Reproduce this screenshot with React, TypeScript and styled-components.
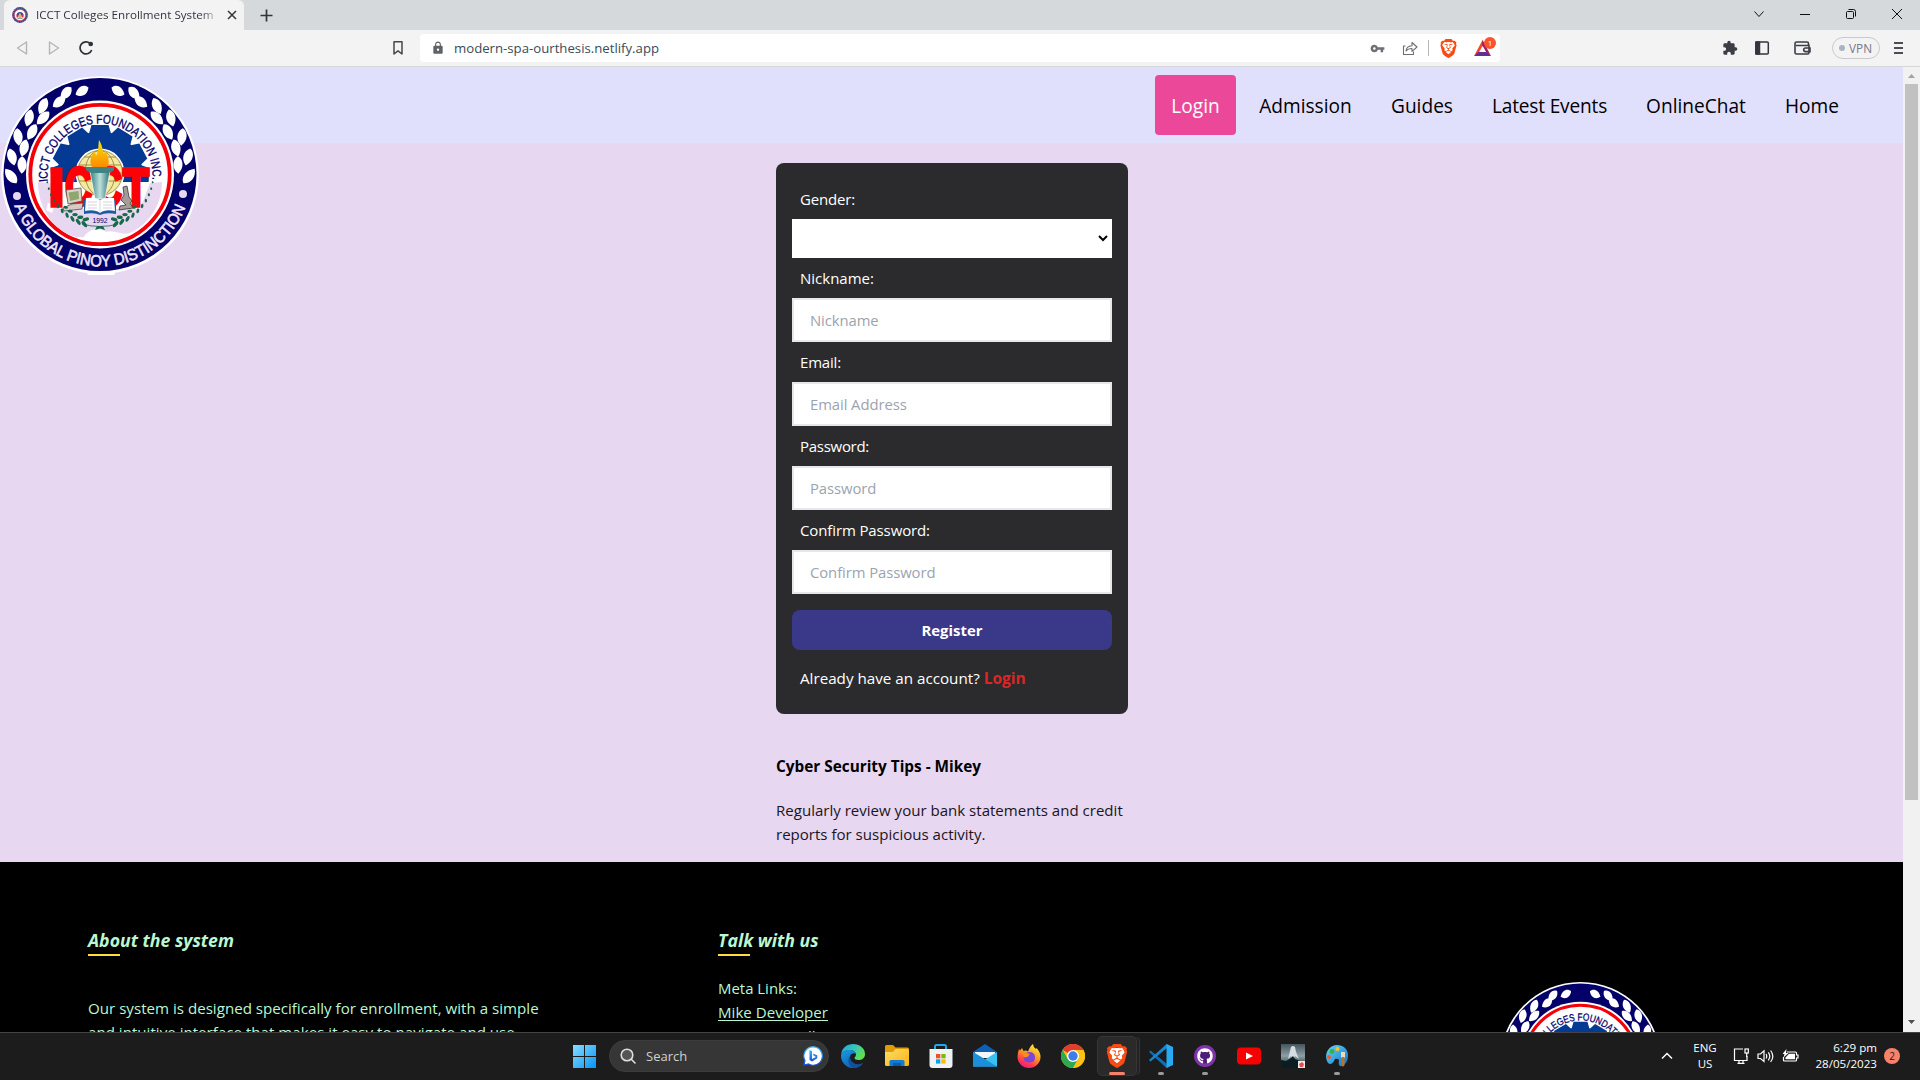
import React from "react";
import styled, { createGlobalStyle, css } from "styled-components";
import { MdExtension, MdVpnKey, MdLock } from "react-icons/md";
import { SiBrave } from "react-icons/si";
import { FaGithub } from "react-icons/fa";

const Global = createGlobalStyle`
  *, *::before, *::after { box-sizing: border-box; }
  html, body { margin: 0; padding: 0; overflow: hidden; }
  body { font-family: "Open Sans", "Noto Sans", sans-serif; }
  h3, p { margin: 0; font-weight: 400; }
  svg { display: block; flex: none; }
`;

const Desktop = styled.div`
  display: flex;
  flex-direction: column;
  width: 1920px;
  height: 1080px;
  overflow: hidden;
`;

/* ---------- browser chrome ---------- */
const TabStrip = styled.div`
  display: flex;
  align-items: center;
  height: 30px;
  padding-left: 4px;
  background: #d5d9dc;
`;
const Tab = styled.div`
  display: flex;
  align-items: center;
  width: 240px;
  height: 30px;
  padding: 0 7px 0 8px;
  border-radius: 6px 6px 0 0;
  background: #f3f3f3;
`;
const TabTitle = styled.div`
  width: 184px;
  margin: 0 7px 1px 8px;
  overflow: hidden;
  white-space: nowrap;
  font-size: 11.65px;
  line-height: 16px;
  color: #33353f;
  mask-image: linear-gradient(90deg, #000 165px, transparent 184px);
`;
const NewTab = styled.div`
  margin-left: 16px;
  flex: 1;
`;
const WindowControls = styled.div`
  display: flex;
  align-items: center;
  gap: 30px;
  padding: 0 15px 2px 0;
`;
const Toolbar = styled.div`
  display: flex;
  align-items: center;
  height: 37px;
  border-bottom: 1px solid #d4d7da;
  background: #f3f3f3;
`;
const NavButtons = styled.div`
  display: flex;
  align-items: center;
  gap: 16px;
  width: 390px;
  padding-left: 15px;
`;
const AddressBar = styled.div`
  display: flex;
  align-items: center;
  width: 1080px;
  height: 28px;
  margin-left: 14px;
  padding: 0 9px 0 11px;
  border-radius: 4px;
  background: #fff;
`;
const Url = styled.span`
  flex: 1;
  margin-left: 9px;
  font-size: 13.2px;
  color: #3b4a5a;
`;
const AddressActions = styled.div`
  display: flex;
  align-items: center;
`;
const ShareSlot = styled.span`
  margin-left: 17px;
`;
const Divider = styled.i`
  width: 1px;
  height: 16px;
  margin: 0 10px;
  background: #b4b6ba;
`;
const RewardsIcon = styled.div`
  position: relative;
  margin-left: 16px;
`;
const RewardsBadge = styled.span`
  position: absolute;
  left: 10px;
  top: -3px;
  width: 12px;
  height: 12px;
  border-radius: 6px;
  background: #fb542b;
  color: #fff;
  font-size: 8px;
  line-height: 12px;
  text-align: center;
`;
const Extensions = styled.div`
  display: flex;
  align-items: center;
  justify-content: flex-end;
  flex: 1;
  padding-right: 15px;
`;
const Spacer = styled.i<{ $wide?: boolean }>`
  width: ${(p) => (p.$wide ? 24 : 16)}px;
`;
const VpnPill = styled.div`
  display: flex;
  align-items: center;
  gap: 4px;
  width: 48px;
  height: 22px;
  margin: 0 13px 0 21px;
  padding-left: 6px;
  border: 1px solid #c8cacf;
  border-radius: 11px;
  color: #74798b;
  font-size: 11.8px;
  &::before {
    content: "";
    width: 6px;
    height: 6px;
    border-radius: 3px;
    background: #aeb1c2;
  }
`;

/* ---------- page ---------- */
const Viewport = styled.div`
  display: flex;
  height: 965px;
  overflow: hidden;
`;
const Page = styled.div`
  width: 1903px;
  height: 965px;
  overflow: hidden;
  background: #e8d7f1;
`;
const SiteHeader = styled.header`
  position: relative;
  display: flex;
  justify-content: flex-end;
  align-items: center;
  height: 76px;
  padding-right: 48px;
  background: #e0dffc;
`;
const HeaderLogo = styled.div`
  position: absolute;
  left: 0;
  top: 8px;
`;
const SiteNav = styled.nav`
  display: flex;
  gap: 7px;
`;
const NavLink = styled.a<{ $active?: boolean; $w: number; $ls?: number }>`
  width: ${(p) => p.$w}px;
  padding: 17px 0 15px;
  border-radius: 4px;
  text-align: center;
  font-size: 19.1px;
  line-height: 28px;
  letter-spacing: ${(p) => p.$ls ?? 0}px;
  white-space: nowrap;
  color: ${(p) => (p.$active ? "#fff" : "#000")};
  background: ${(p) => (p.$active ? "#ec4899" : "transparent")};
`;
const Main = styled.main`
  width: 352px;
  height: 719px;
  margin-left: 776px;
  padding-top: 20px;
`;
const Card = styled.form`
  display: flex;
  flex-direction: column;
  height: 551px;
  padding: 16px;
  border-radius: 8px;
  background: #2b2b2d;
  color: #fff;
  & > * { flex-shrink: 0; }
`;
const Label = styled.label<{ $ls?: number }>`
  padding: 8px;
  font-size: 15px;
  line-height: 24px;
  letter-spacing: ${(p) => p.$ls ?? -0.18}px;
`;
const Select = styled.div`
  display: flex;
  align-items: center;
  justify-content: flex-end;
  height: 39px;
  padding-right: 4px;
  background: #fff;
`;
const Input = styled.input`
  display: block;
  width: 320px;
  height: 44px;
  padding: 8px 16px;
  border: 2px solid #e5e7eb;
  border-radius: 0;
  background: #fff;
  font: 14.85px/24px "Open Sans", "Noto Sans", sans-serif;
  letter-spacing: -0.08px;
  &::placeholder { color: #9ca3af; opacity: 1; }
`;
const Submit = styled.button`
  height: 40px;
  margin-top: 16px;
  border: 0;
  border-radius: 8px;
  background: #3a3889;
  color: #fff;
  font: 700 14.9px/24px "Open Sans", "Noto Sans", sans-serif;
`;
const Hint = styled.p`
  padding: 16px 8px 0;
  font-size: 15.2px;
  line-height: 24px;
  white-space: nowrap;
  b { color: #dc2626; font-size: 15.5px; }
`;
const TipTitle = styled.h3`
  margin-top: 40px;
  font-size: 15.35px;
  line-height: 24px;
  font-weight: 700;
  color: #000;
`;
const TipText = styled.p`
  margin-top: 20px;
  font-size: 15.05px;
  line-height: 24px;
  white-space: nowrap;
  color: #1b1422;
`;
const Footer = styled.footer`
  display: flex;
  height: 170px;
  padding-left: 88px;
  background: #000;
  color: #bbf7d0;
`;
const FooterColumn = styled.section<{ $w: number }>`
  width: ${(p) => p.$w}px;
  padding-top: 64px;
`;
const FooterTitle = styled.h3`
  width: max-content;
  font-size: 17.7px;
  line-height: 28px;
  font-style: italic;
  font-weight: 700;
  &::after {
    content: "";
    display: block;
    width: 32px;
    height: 2px;
    background: #ffdd3c;
  }
`;
const FooterText = styled.p<{ $top: number; $size?: number }>`
  margin-top: ${(p) => p.$top}px;
  font-size: ${(p) => p.$size ?? 15.13}px;
  line-height: 24px;
  white-space: nowrap;
`;
const FooterLink = styled.a`
  display: block;
  font-size: 15.1px;
  line-height: 24px;
  text-decoration: underline;
  text-decoration-thickness: 1px;
  text-underline-offset: 1.5px;
`;
const FooterLogo = styled.div`
  margin: 119px 0 0 63px;
`;
const Scrollbar = styled.div`
  display: flex;
  flex-direction: column;
  align-items: center;
  width: 17px;
  height: 965px;
  padding-top: 7px;
  background: #f1f1f1;
`;
const Thumb = styled.div`
  flex: none;
  width: 13px;
  height: 716px;
  margin: 6px 0 220px;
  background: #c1c1c1;
`;

/* ---------- taskbar ---------- */
const Taskbar = styled.div`
  display: flex;
  height: 48px;
  padding: 0 0 1px 573px;
  border-top: 1px solid #434343;
  background: #1c1c1c;
  color: #fff;
`;
const Centered = styled.div`
  display: flex;
  align-items: center;
`;
const SearchPill = styled.div`
  display: flex;
  align-items: center;
  width: 220px;
  height: 32px;
  margin: 0 2px 0 13px;
  padding: 0 5px 0 10px;
  border: 1px solid #3d3d3d;
  border-radius: 16px;
  background: #363636;
  color: #d0d0d0;
  font-size: 13px;
`;
const SearchText = styled.span`
  flex: 1;
  margin-left: 10px;
`;
const AppTile = styled.div<{ $active?: boolean }>`
  position: relative;
  display: flex;
  align-items: center;
  justify-content: center;
  width: 40px;
  height: 40px;
  margin: 0 2px;
  border-radius: 5px;
  ${(p) =>
    p.$active &&
    css`
      border: 1px solid #363636;
      background: #2a2a2a;
      box-shadow: 3px 0 0 -1px #222, 4px 0 0 -1px #353535;
    `}
`;
const Indicator = styled.i<{ $wide?: boolean }>`
  position: absolute;
  bottom: ${(p) => (p.$wide ? 0 : 1)}px;
  width: ${(p) => (p.$wide ? 16 : 6)}px;
  height: 3px;
  border-radius: 2px;
  background: ${(p) => (p.$wide ? "#f7826a" : "#9a9a9a")};
`;
const Tray = styled.div`
  display: flex;
  align-items: center;
  justify-content: flex-end;
  flex: 1;
  padding-right: 20px;
  font-size: 11.6px;
  line-height: 16px;
`;
const Language = styled.div`
  width: 30px;
  margin: 0 13px 0 17px;
  text-align: center;
  font-size: 11.5px;
`;
const Status = styled.div`
  display: flex;
  align-items: center;
  gap: 8px;
  padding-right: 1px;
`;
const Clock = styled.div`
  width: 70px;
  margin: 0 7px 0 7px;
  text-align: right;
`;
const Badge = styled.div`
  width: 16px;
  height: 16px;
  border-radius: 8px;
  background: #f7826a;
  color: #1c1c1c;
  font-size: 10px;
  text-align: center;
`;

/* ---------- college seal ---------- */
const leaves: [number, number, number, number][] = [
  [82, 16, 7, -12], [66, 18, 7.5, -32], [59, 27, 7.5, -22], [43, 31, 8.5, -52],
  [43, 43, 8.5, -32], [29, 43, 8.5, -62], [32, 57, 8.5, -48], [18, 62, 8.5, -82],
  [24, 73, 8.5, -62], [12, 82, 8.5, -92], [22, 90, 8.5, -75], [11, 101, 9, 65],
];
const teeth = [-93, -62, -31, 0, 31, 62, 93];
const sprig = [100, 107, 114, 121, 128, 135, 142, 149, 156, 163];

function Seal({ size, id, ground }: { size: number; id: string; ground: string }) {
  return (
    <svg width={size} height={size} viewBox="0 0 200 200">
      <defs>
        <path id={id + "t"} d="M47.8 106.5A52.5 52.5 0 1 1 152.2 106.5" />
        <path id={id + "b"} d="M13.5 128A91 91 0 0 0 187.5 126" />
        <clipPath id={id + "c"}><rect x="30" y="30" width="140" height="77" /></clipPath>
        <linearGradient id={id + "f"} x1="0" y1="0" x2="0" y2="1">
          <stop offset="0" stopColor="#f5e400" /><stop offset="1" stopColor="#ff8a00" />
        </linearGradient>
        <linearGradient id={id + "s"}>
          <stop offset="0" stopColor="#2f7f7f" /><stop offset=".5" stopColor="#bfe0dc" /><stop offset="1" stopColor="#2c6f75" />
        </linearGradient>
      </defs>
      <path d="M84 192H118L114 200H88Z" fill="#fff" />
      <circle cx="100" cy="100" r="98.8" fill="#fff" />
      <circle cx="100" cy="99.5" r="96.5" fill="#04006a" />
      {[0, 1].map((side) => (
        <g key={side} transform={side ? "translate(200 0) scale(-1 1)" : undefined} fill="#fff">
          {leaves.map(([x, y, r, a], i) => (
            <path key={i} transform={`translate(${x} ${y}) rotate(${a})`} d={`M${-r} 2C${-r * 0.5} -5.5 ${r * 0.5} -7 ${r} -2C${r * 0.7} 5 ${-r * 0.3} 7 ${-r} 2Z`} />
          ))}
        </g>
      ))}
      <circle cx="17" cy="121" r="4" fill="#e8d7f1" />
      <circle cx="183" cy="119" r="4" fill="#e8d7f1" />
      <circle cx="100" cy="99.5" r="74" fill="#fff" />
      <circle cx="100" cy="99.5" r="69.7" fill="#fff" stroke="#f40009" strokeWidth="3.8" />
      <path d="M38 107L50 108L60 134L140 134L150 108L162 107C162 130 149 149 130 158C124 161 112 154 106 157C100 152 88 154 84 162C78 163 70 161 64 157C47 146 38 127 38 107Z" fill={ground} />
      <path d="M48 128l7 2-3 8-6-3z" fill="#fff" />
      <text fontFamily="Liberation Sans, Arial, sans-serif" fontSize="12.5" fill="#04006a" stroke="#04006a" strokeWidth=".35">
        <textPath href={`#${id}t`} textLength="174" lengthAdjust="spacingAndGlyphs">ICCT COLLEGES FOUNDATION INC.</textPath>
      </text>
      <text fontFamily="Liberation Sans, Arial, sans-serif" fontSize="16" fill="#efe6fa" stroke="#efe6fa" strokeWidth=".6">
        <textPath href={`#${id}b`} startOffset="3" textLength="222" lengthAdjust="spacingAndGlyphs">A GLOBAL PINOY DISTINCTION</textPath>
      </text>
      <g clipPath={`url(#${id}c)`} fill="#043a93">
        <circle cx="100" cy="99" r="42.5" />
        {teeth.map((a) => (
          <path key={a} transform={`rotate(${a} 100 99)`} d="M88 62L91.500 50H108.500L112 62Z" />
        ))}
      </g>
      <circle cx="100" cy="98" r="24.500" fill="#fff" />
      <circle cx="100" cy="98" r="22.500" fill="#f3e9a0" />
      <g fill="none" stroke="#8a7a2c" strokeWidth=".8">
        <circle cx="100" cy="98" r="22.500" />
        <ellipse cx="100" cy="98" rx="15" ry="22.500" />
        <path d="M79 90H121M77.500 98H122.500M79 106H121M84 82H116" />
      </g>
      <g fontFamily="Liberation Sans, Arial, sans-serif" fontWeight="700" fontSize="54" fill="#fb0207" stroke="#fb0207" strokeWidth="3.500">
        <text x="48.500" y="130.500" textLength="16" lengthAdjust="spacingAndGlyphs">I</text>
        <text x="65" y="130" textLength="27" lengthAdjust="spacingAndGlyphs">C</text>
        <text x="96" y="130" textLength="26" lengthAdjust="spacingAndGlyphs">C</text>
        <text x="123" y="130.500" textLength="26" lengthAdjust="spacingAndGlyphs">T</text>
      </g>
      <path d="M90 96H110L105 124H95Z" fill={`url(#${id}s)`} stroke="#fff" strokeWidth=".7" />
      <path d="M86 92h28v3q-3 3-6 3H92q-3 0-6-3z" fill="#3d8585" />
      <path d="M92 92C88 84 93 82 93 76C95 77 96 79 96 81C99 76 98 71 99 65C103 71 102 75 104 79L106 73C105 80 112 85 107 92Z" fill={`url(#${id}f)`} />
      <path d="M66 115l15-2 1 13-14 3z" fill="#d9d2cb" stroke="#5b5148" strokeWidth=".8" />
      <path d="M68.500 117.500l10-1.500.500 8-9 2z" fill="#8fa66f" />
      <path d="M63 133l9-4 11-1-1 6-18 2z" fill="#d7c9c4" stroke="#5b5148" strokeWidth=".8" />
      <path d="M123 112l4-1 2 11 3 4-2 2 3 5-14 2 1-4 6-1-5-5 3-5z" fill="#a39c98" stroke="#3a3433" strokeWidth=".8" />
      <path d="M84 125h32v14q-10-2-16 1q-6-3-16-1z" fill="#1f5ba5" />
      <path d="M86 123q9-1 14 2q5-3 14-2l1 13q-10-2-15 2q-5-4-15-2z" fill="#fff" />
      <path d="M88 127h9M88 130h9M88 133h9M103 127h9M103 130h9M103 133h9M100 125v13" stroke="#b9b9c6" strokeWidth=".6" />
      {[0, 1].map((side) => (
        <g key={side} transform={side ? "translate(200 0) scale(-1 1)" : undefined} fill="#17694a">
          {sprig.map((a, i) => (
            <g key={a} transform={`rotate(${-a} 100 98)`}>
              <ellipse cx="100" cy={44.5} rx={1 + i * 0.3} ry={0.9 + i * 0.1} transform="rotate(32 100 44.500)" />
              {i > 4 && <ellipse cx="100" cy="49.500" rx={1 + i * 0.26} ry={0.9 + i * 0.1} transform="rotate(-32 100 49.500)" />}
            </g>
          ))}
        </g>
      ))}
      <path d="M82 149q18 5 36 0" stroke="#17694a" strokeWidth=".8" fill="none" />
      <path d="M97 151l-2 4 5-1.500 5 1.500-2-4z" fill="#17694a" />
      <text x="100" y="148" textAnchor="middle" fontFamily="Liberation Sans, Arial, sans-serif" fontSize="6.800" fill="#04006a">1992</text>
    </svg>
  );
}

/* ---------- favicon: the seal reduced to its colours ---------- */
const Favicon = () => (
  <svg width="16" height="16" viewBox="0 0 16 16">
    <circle cx="8" cy="8" r="7.900" fill="#3c3a80" />
    <circle cx="8" cy="8" r="7" fill="none" stroke="#8f8cb8" strokeWidth=".9" strokeDasharray="1 1" />
    <circle cx="8" cy="8" r="5.700" fill="#fff" stroke="#d8405a" strokeWidth=".8" />
    <path d="M4.500 8.500a3.500 3.500 0 0 1 7 0z" fill="#2c4f9c" />
    <path d="M4.500 7.500h2v3h-2zM9.500 7.500h2v3h-2z" fill="#e2293a" />
    <path d="M7 6.500h2V11H7z" fill="#d8b870" />
    <path d="M5.500 11.500h5" stroke="#5c9080" strokeWidth=".8" />
  </svg>
);

/* ---------- icons ---------- */
const BraveMark = ({ size }: { size: number }) => (
  <svg width={size} height={size} viewBox="0 0 24 24">
    <path d="M6 4h12l2 5-3 10-5 3-5-3L4 9z" fill="#fff" />
    <SiBrave size={24} color="#fb4a12" />
  </svg>
);
const StartIcon = () => (
  <svg width="23" height="23" viewBox="0 0 23 23">
    <defs><linearGradient id="win" x1="0" y1="0" x2="1" y2="1"><stop stopColor="#86deff" /><stop offset="1" stopColor="#0894f5" /></linearGradient></defs>
    <path d="M0 0h11v11H0zM12 0h11v11H12zM0 12h11v11H0zM12 12h11v11H12z" fill="url(#win)" />
  </svg>
);
const SearchIcon = () => (
  <svg width="16" height="16" viewBox="0 0 16 16" fill="#555" stroke="#dedede" strokeWidth="1.600">
    <circle cx="7" cy="7" r="5.800" /><path d="M11.300 11.300L15 15" strokeLinecap="round" />
  </svg>
);
const Bing = () => (
  <svg width="20" height="20" viewBox="0 0 20 20">
    <defs><linearGradient id="bing" x1="0" y1="0" x2="0" y2="1"><stop stopColor="#35b8f6" /><stop offset="1" stopColor="#1a4fd6" /></linearGradient></defs>
    <path d="M10 .8A9.200 9.200 0 1 1 5.600 18L1 19l1-4.500A9.200 9.200 0 0 1 10 .8z" fill="#fff" stroke="url(#bing)" strokeWidth="1.200" />
    <path d="M6.500 4l2.500 1v8l4-2-2.300-1.200L9.800 7.500l4.500 1.800v3L9 15.500l-2.500-1.500z" fill="url(#bing)" />
  </svg>
);
const Edge = () => (
  <svg width="24" height="24" viewBox="0 0 24 24">
    <defs>
      <linearGradient id="e1" x1="0" y1="0" x2="1" y2=".5"><stop stopColor="#1fa2e6" /><stop offset=".55" stopColor="#37c6b8" /><stop offset="1" stopColor="#5fe04c" /></linearGradient>
      <linearGradient id="e2" x1="0" y1="0" x2=".7" y2="1"><stop stopColor="#1b9de2" /><stop offset="1" stopColor="#0d57ad" /></linearGradient>
    </defs>
    <path d="M0 10.500C1 4 6 0 12 0c7 0 12 4.500 12 10 0 4-3 6-6.500 6-2.500 0-4-1-4-2s1.500-1.500 1.500-3.500C15 8 12 6 8.500 6 4 6 1 8.500 0 10.500z" fill="url(#e1)" />
    <path d="M0 11C1 8 4.500 6 8.500 6c3.500 0 6 1.800 6.400 4C13 8.500 9 9.500 9 13.500c0 4 4 7 8 7 2 0 3.500-.6 5-1.500A12 12 0 0 1 12 24C5 24-.3 18 0 11z" fill="url(#e2)" />
    <path d="M9.200 12c-.8 4 3 8.500 7.800 8.500 2 0 3.500-.6 5-1.500-2 3.200-5.500 5-9 5C8 23 5.500 15 9.200 12z" fill="#134f9c" />
  </svg>
);
const Explorer = () => (
  <svg width="24" height="22" viewBox="0 0 24 22">
    <defs><linearGradient id="ex" x1="0" y1="0" x2="1" y2="1"><stop stopColor="#ffdc6b" /><stop offset="1" stopColor="#f8b40c" /></linearGradient></defs>
    <path d="M0 1.500Q0 0 1.500 0H8l2.500 2.500H22.500Q24 2.500 24 4v6H0z" fill="#e09b06" />
    <path d="M0 7h8l2.500-3H22.500Q24 4 24 5.500v14Q24 21 22.500 21H1.500Q0 21 0 19.500z" fill="url(#ex)" />
    <path d="M4.500 21v-4.500Q4.500 15 6 15h12q1.500 0 1.500 1.500V21z" fill="#1379d2" /><path d="M8 18h8v3H8z" fill="#0c5aa8" />
  </svg>
);
const Store = () => (
  <svg width="24" height="24" viewBox="0 0 24 24">
    <path d="M6 7V2.500Q6 1 7.500 1h8Q17 1 17 2.500V7" fill="none" stroke="#1fa7ee" strokeWidth="2" />
    <path d="M.5 5h23v16q0 3-3 3h-17q-3 0-3-3z" fill="#eff1f3" />
    <path d="M7 10h4.300v4.300H7z" fill="#f25022" /><path d="M12.300 10h4.300v4.300h-4.300z" fill="#7fba00" />
    <path d="M7 15.300h4.300v4.300H7z" fill="#00a4ef" /><path d="M12.300 15.300h4.300v4.300h-4.300z" fill="#ffb900" />
  </svg>
);
const Mail = () => (
  <svg width="24" height="24" viewBox="0 0 24 24">
    <path d="M0 8L12 0l12 8v3H0z" fill="#0c5fb4" /><path d="M2 8h20v6H2z" fill="#f3f5f7" />
    <path d="M0 8l12 7.500L24 8v14.500H0z" fill="#35c1f1" /><path d="M0 22.500V8l24 14.500z" fill="#1b8fdc" />
  </svg>
);
const Firefox = () => (
  <svg width="24" height="24" viewBox="0 0 24 24">
    <defs><linearGradient id="ff" x1=".8" y1="0" x2=".3" y2="1"><stop stopColor="#fff04a" /><stop offset=".45" stopColor="#ff9a1f" /><stop offset=".8" stopColor="#ff3750" /><stop offset="1" stopColor="#f0168c" /></linearGradient></defs>
    <path d="M2 5l1 1.500L5 4l1.500 3Q9 6 11 7.500 13 2 16 0q0 3 3 5l.5-1Q23.500 8 23.500 13A11.500 11 0 0 1 .5 13Q.5 9 2 5z" fill="url(#ff)" />
    <path d="M12 8q6 0 6 5.500T12 18.500 6.500 13q3 1 5-1-3 0-3.500-2.500Q10 8 12 8z" fill="#7a45d9" /><path d="M5 8q4-1 6 1.500 2 0 1.500 1.300-2 3.200-5.500 2.200z" fill="#ff8a1e" />
  </svg>
);
const Chrome = () => (
  <svg width="24" height="24" viewBox="0 0 24 24">
    <circle cx="12" cy="12" r="12" fill="#fbc116" />
    <path d="M12 12L1.600 6A12 12 0 0 1 22.400 6H12z" fill="#e33b2e" />
    <path d="M1.600 6A12 12 0 0 0 12 24l5.200-9L12 12 6.800 15z" fill="#2da94f" />
    <path d="M12 6h10.400A12 12 0 0 1 12 24l5.200-9z" fill="#fbc116" />
    <circle cx="12" cy="12" r="6" fill="#fff" /><circle cx="12" cy="12" r="4.700" fill="#3b7ded" />
  </svg>
);
const VsCode = () => (
  <svg width="24" height="24" viewBox="0 0 24 24">
    <path d="M1.500 6.500L0 8l17.500 16 3-2z" fill="#0e6fb8" /><path d="M1.500 17.500L0 16 17.500 0l3 2z" fill="#1787cf" />
    <path d="M17.500 0L24 3v18l-6.500 3z" fill="#2aa9f3" />
  </svg>
);
const GithubDesktop = () => (
  <svg width="24" height="24" viewBox="0 0 24 24">
    <circle cx="12" cy="12" r="11" fill="#8034a9" /><circle cx="12" cy="12" r="7.500" fill="#4d1d78" />
    <FaGithub x="4" y="4" size={16} color="#fff" />
  </svg>
);
const YouTube = () => (
  <svg width="24" height="18" viewBox="0 0 24 18"><rect width="24" height="17" rx="4" y=".5" fill="#f80000" /><path d="M9 5.500l7 3.500-7 3.500z" fill="#fff" /></svg>
);
const Game = () => (
  <svg width="24" height="24" viewBox="0 0 24 24">
    <defs><linearGradient id="gm" x1="0" y1="0" x2="0" y2="1"><stop stopColor="#46545c" /><stop offset=".5" stopColor="#8d9fa6" /><stop offset="1" stopColor="#0d2224" /></linearGradient></defs>
    <path d="M0 0h24v24H0z" fill="url(#gm)" />
    <path d="M10 3q2-2 4 0l1 5 3 7-4-3-1 2h-2l-1-2-3 3 2-8z" fill="#d5dde0" /><path d="M0 16l5 1 5-3 2-2 2 3 5 2h5v7H0z" fill="#0b1d20" />
    <path d="M17 17h7v7h-7z" fill="#f5e5e5" /><path d="M18 20l3-2 2 2-1 3h-3z" fill="#e05050" />
  </svg>
);
const Paint = () => (
  <svg width="24" height="24" viewBox="0 0 24 24">
    <defs><linearGradient id="pt" x1="0" y1="0" x2="1" y2="1"><stop stopColor="#6cd7f7" /><stop offset="1" stopColor="#0a72c9" /></linearGradient></defs>
    <path d="M12 1C18 1 23 5 23 11q0 6-3 9-3 3-5 2t-1-5q0-3-4-2-2 5-5 5T1 13C1 6 6 1 12 1z" fill="url(#pt)" />
    <circle cx="7" cy="7.500" r="2.400" fill="#3fae3f" /><circle cx="12.500" cy="5" r="2" fill="#ffc419" /><circle cx="4" cy="13" r="2" fill="#ef5a35" />
    <path d="M16 8h4v6h-4z" fill="#eadbc0" /><path d="M16.500 13h3v8q-1.500 3-3 0z" fill="#b97326" />
  </svg>
);

const apps: { icon: React.ReactNode; running?: boolean; active?: boolean }[] = [
  { icon: <Edge /> },
  { icon: <Explorer /> },
  { icon: <Store /> },
  { icon: <Mail /> },
  { icon: <Firefox /> },
  { icon: <Chrome /> },
  { icon: <BraveMark size={24} />, running: true, active: true },
  { icon: <VsCode />, running: true },
  { icon: <GithubDesktop />, running: true },
  { icon: <YouTube /> },
  { icon: <Game /> },
  { icon: <Paint />, running: true },
];

const fields = [
  { label: "Nickname:", hint: "Nickname", ls: 0 },
  { label: "Email:", hint: "Email Address", ls: -0.18 },
  { label: "Password:", hint: "Password", ls: -0.28 },
  { label: "Confirm Password:", hint: "Confirm Password", ls: -0.12 },
];

function BrowserChrome() {
  return (
    <>
      <TabStrip>
        <Tab>
          <Favicon />
          <TabTitle>ICCT Colleges Enrollment System</TabTitle>
          <svg width="10" height="10" viewBox="0 0 10 10" stroke="#33353d" strokeWidth="1.500"><path d="M1 1l8 8M9 1l-8 8" /></svg>
        </Tab>
        <NewTab>
          <svg width="13" height="13" viewBox="0 0 13 13" stroke="#33353d" strokeWidth="1.700"><path d="M6.500 .5v12M.5 6.500h12" /></svg>
        </NewTab>
        <WindowControls>
          <svg width="16" height="16" viewBox="0 0 16 16" fill="none" stroke="#111"><path d="M3.500 5.500l4.500 5 4.500-5" /></svg>
          <svg width="16" height="16" viewBox="0 0 16 16" stroke="#111"><path d="M3 8.500h10" /></svg>
          <svg width="16" height="16" viewBox="0 0 16 16" fill="none" stroke="#111"><rect x="3.500" y="5.500" width="7" height="7" rx="1" /><path d="M5.500 3.500h5q2 0 2 2v5" /></svg>
          <svg width="16" height="16" viewBox="0 0 16 16" stroke="#111"><path d="M3 3l10 10M13 3L3 13" /></svg>
        </WindowControls>
      </TabStrip>
      <Toolbar>
        <NavButtons>
          <svg width="16" height="16" viewBox="0 0 16 16" fill="none" stroke="#b3b5b9" strokeWidth="1.400" strokeLinejoin="round"><path d="M11.500 2v12L2.500 8z" /></svg>
          <svg width="16" height="16" viewBox="0 0 16 16" fill="none" stroke="#b3b5b9" strokeWidth="1.400" strokeLinejoin="round"><path d="M2.500 2v12l9-6z" /></svg>
          <svg width="16" height="16" viewBox="0 0 16 16" fill="none" stroke="#2f3238" strokeWidth="1.700"><path d="M12.700 10A6 6 0 1 1 11.200 3.500" /><circle cx="11.700" cy="4" r="1.500" fill="#2f3238" /></svg>
        </NavButtons>
        <svg width="16" height="16" viewBox="0 0 16 16" fill="none" stroke="#45484f" strokeWidth="1.500" strokeLinejoin="round"><path d="M4 1.800h8V14l-4-3.200L4 14z" /></svg>
        <AddressBar>
          <MdLock size={14} color="#5f6368" />
          <Url>modern-spa-ourthesis.netlify.app</Url>
          <AddressActions>
            <MdVpnKey size={15} color="#6c6f75" />
            <ShareSlot>
              <svg width="16" height="16" viewBox="0 0 16 16" fill="none" stroke="#6c6f75" strokeWidth="1.100" strokeLinejoin="round">
                <path d="M3.500 6H1.500v8.500h10v-3" /><path d="M4 11q.5-5 6-5.300V2.500L15 7l-5 4.300V8.500Q6 8.500 4 11z" />
              </svg>
            </ShareSlot>
            <Divider />
            <BraveMark size={19} />
            <RewardsIcon>
              <svg width="17" height="16" viewBox="0 0 17 16">
                <path d="M8.500 0L11 4.500 5.500 12 0 16z" fill="#ff4724" /><path d="M8.500 0l8.500 16-5-4-4-7z" fill="#9e1f63" /><path d="M0 16l4.500-4.200h8L17 16z" fill="#662d91" />
                <path d="M8.500 6l3.300 5.900H5.200z" fill="#fff" />
              </svg>
              <RewardsBadge>1</RewardsBadge>
            </RewardsIcon>
          </AddressActions>
        </AddressBar>
        <Extensions>
          <MdExtension size={16} color="#3b3e45" />
          <Spacer />
          <svg width="16" height="16" viewBox="0 0 16 16" fill="none" stroke="#33363d" strokeWidth="1.500"><rect x="1.800" y="2" width="12.500" height="12" rx="1" /><path d="M2 2h3.500v12H2z" fill="#33363d" /></svg>
          <Spacer $wide />
          <svg width="17" height="16" viewBox="0 0 17 16" fill="none" stroke="#3b3e45" strokeWidth="1.600"><path d="M14.500 5V3.500Q14.500 2 13 2H2.500Q1 2 1 3.500v9Q1 14 2.500 14h11q1.500 0 1.500-1.500V5.500H2" /><path d="M16 8h-4.500a1.800 1.800 0 0 0 0 3.600H16z" /></svg>
          <VpnPill>VPN</VpnPill>
          <svg width="12" height="14" viewBox="0 0 12 14" stroke="#4b4e55" strokeWidth="1.800"><path d="M1 2h9M1 7h9M1 12h9" /></svg>
        </Extensions>
      </Toolbar>
    </>
  );
}

export default function App() {
  return (
    <Desktop>
      <Global />
      <BrowserChrome />
      <Viewport>
        <Page>
          <SiteHeader>
            <HeaderLogo><Seal size={200} id="top" ground="#e8d7f1" /></HeaderLogo>
            <SiteNav>
              <NavLink $active $w={81}>Login</NavLink>
              <NavLink $w={125}>Admission</NavLink>
              <NavLink $w={94}>Guides</NavLink>
              <NavLink $w={147} $ls={-0.18}>Latest Events</NavLink>
              <NavLink $w={132}>OnlineChat</NavLink>
              <NavLink $w={86}>Home</NavLink>
            </SiteNav>
          </SiteHeader>
          <Main>
            <Card>
              <Label>Gender:</Label>
              <Select>
                <svg width="10" height="7" viewBox="0 0 10 7" fill="none" stroke="#000" strokeWidth="2"><path d="M1 1l4 4 4-4" /></svg>
              </Select>
              {fields.map((f) => (
                <React.Fragment key={f.label}>
                  <Label $ls={f.ls}>{f.label}</Label>
                  <Input placeholder={f.hint} />
                </React.Fragment>
              ))}
              <Submit type="button">Register</Submit>
              <Hint>Already have an account? <b>Login</b></Hint>
            </Card>
            <TipTitle>Cyber Security Tips - Mikey</TipTitle>
            <TipText>Regularly review your bank statements and credit<br />reports for suspicious activity.</TipText>
          </Main>
          <Footer>
            <FooterColumn $w={630}>
              <FooterTitle>About the system</FooterTitle>
              <FooterText $top={40}>Our system is designed specifically for enrollment, with a simple<br />and intuitive interface that makes it easy to navigate and use</FooterText>
            </FooterColumn>
            <FooterColumn $w={718}>
              <FooterTitle>Talk with us</FooterTitle>
              <FooterText $top={20} $size={14.95}>Meta Links:</FooterText>
              <FooterLink>Mike Developer</FooterLink>
              <FooterLink>Simone Caroll</FooterLink>
            </FooterColumn>
            <FooterLogo><Seal size={163} id="foot" ground="#000" /></FooterLogo>
          </Footer>
        </Page>
        <Scrollbar>
          <svg width="7" height="4" viewBox="0 0 7 4"><path d="M0 4h7L3.500 0z" fill="#a3a3a3" /></svg>
          <Thumb />
          <svg width="7" height="4" viewBox="0 0 7 4"><path d="M0 0h7L3.500 4z" fill="#505050" /></svg>
        </Scrollbar>
      </Viewport>
      <Taskbar>
        <Centered>
          <StartIcon />
          <SearchPill><SearchIcon /><SearchText>Search</SearchText><Bing /></SearchPill>
          {apps.map((a, i) => (
            <AppTile key={i} $active={a.active}>
              {a.icon}
              {a.running && <Indicator $wide={a.active} />}
            </AppTile>
          ))}
        </Centered>
        <Tray>
          <svg width="12" height="8" viewBox="0 0 12 8" fill="none" stroke="#fff" strokeWidth="1.500"><path d="M1 6.500l5-5 5 5" /></svg>
          <Language>ENG<br />US</Language>
          <Status>
            <svg width="16" height="16" viewBox="0 0 16 16" fill="none" stroke="#fff" strokeWidth="1.200"><path d="M10 1H1.500v11.500H14V8M4.500 15.300h7M6 12.500v2.500M10 12.500v2.500" /><rect x="12" y="1" width="3.300" height="4" /><path d="M13.700 5v4" /></svg>
            <svg width="17" height="16" viewBox="0 0 17 16" fill="none" stroke="#fff" strokeWidth="1.200"><path d="M1 6v4.500h2.500L7 13.500V2.800L3.500 6zM9 6q1.500 2.200 0 4.500M11.300 4.300q3 4 0 8M13.600 2.500q4.500 5.800 0 11.500" /></svg>
            <svg width="17" height="14" viewBox="0 0 17 14"><path d="M5 3h8.500q1 0 1 1v2h1.500v3h-1.500v2q0 1-1 1h-11q-1 0-1-1V8" fill="none" stroke="#fff" strokeWidth="1.200" /><path d="M7 4.800h6v5.500H3.500V8.500z" fill="#fff" /><path d="M4.500 0L.5 5h2L1.500 8.500 6.500 4h-2.500z" fill="#fff" /></svg>
          </Status>
          <Clock>6:29 pm<br />28/05/2023</Clock>
          <Badge>2</Badge>
        </Tray>
      </Taskbar>
    </Desktop>
  );
}
